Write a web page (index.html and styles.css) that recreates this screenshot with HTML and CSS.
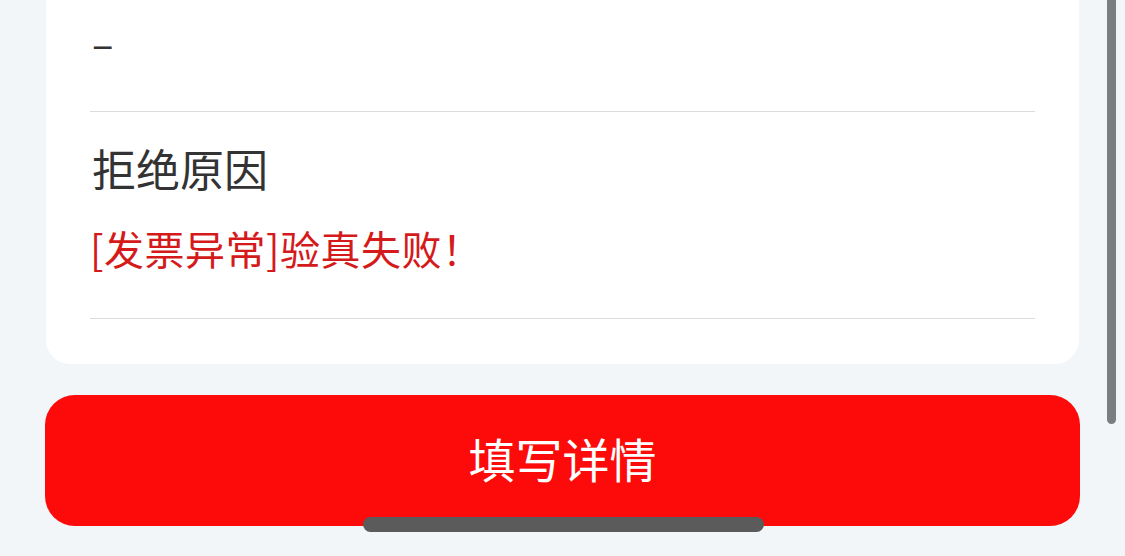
FILE: index.html
```html
<!DOCTYPE html>
<html lang="zh-CN">
<head>
<meta charset="utf-8">
<link rel="stylesheet" href="styles.css">
</head>
<body>
<div class="page">
  <div class="card">
    <div class="row row-first">
      <div class="value dash">–</div>
    </div>
    <div class="row row-reason">
      <div class="label">拒绝原因</div>
      <div class="value reason">[发票异常]验真失败！</div>
    </div>
  </div>
  <button class="btn">填写详情</button>
</div>
<div class="scrollbar"></div>
<div class="home-indicator"></div>
</body>
</html>
```
FILE: styles.css
```css
html, body {
  margin: 0;
  padding: 0;
  height: 100%;
}
body {
  background: #f2f6f9;
  font-family: "Noto Sans CJK SC", "Noto Sans", sans-serif;
  overflow: hidden;
  position: relative;
}
.page {
  padding-left: 45px;
  width: 1035px;
}
.card {
  background: #ffffff;
  margin-left: 1px;
  width: 1033px;
  border-radius: 0 0 24px 24px;
  padding: 0 44px 45px 44px;
  box-sizing: border-box;
}
.row {
  border-bottom: 1px solid #dcdcdc;
}
.row-first {
  height: 112px;
  box-sizing: border-box;
  padding-top: 14px;
}
.dash {
  font-size: 40px;
  line-height: 56px;
  color: #333333;
  padding-left: 2px;
}
.row-reason {
  padding-top: 26px;
  padding-bottom: 42px;
}
.label {
  font-size: 44px;
  line-height: 60px;
  color: #333333;
  padding-left: 2px;
}
.reason {
  margin-top: 22px;
  font-size: 40px;
  line-height: 56px;
  color: #d41a1a;
  letter-spacing: 0.5px;
}
.btn {
  display: block;
  margin-top: 31px;
  width: 1035px;
  height: 131px;
  border: none;
  border-radius: 30px;
  background: #fd0a0a;
  color: #ffffff;
  font-family: "Noto Sans CJK SC", "Noto Sans", sans-serif;
  font-size: 47px;
  padding: 0 0 6px 0;
}
.scrollbar {
  position: absolute;
  top: 0;
  left: 1107px;
  width: 9px;
  height: 424px;
  background: #7b7e80;
  border-radius: 0 0 5px 5px;
}
.home-indicator {
  position: absolute;
  left: 363px;
  top: 517px;
  width: 401px;
  height: 15px;
  border-radius: 8px;
  background: #5b5b5b;
}
```
